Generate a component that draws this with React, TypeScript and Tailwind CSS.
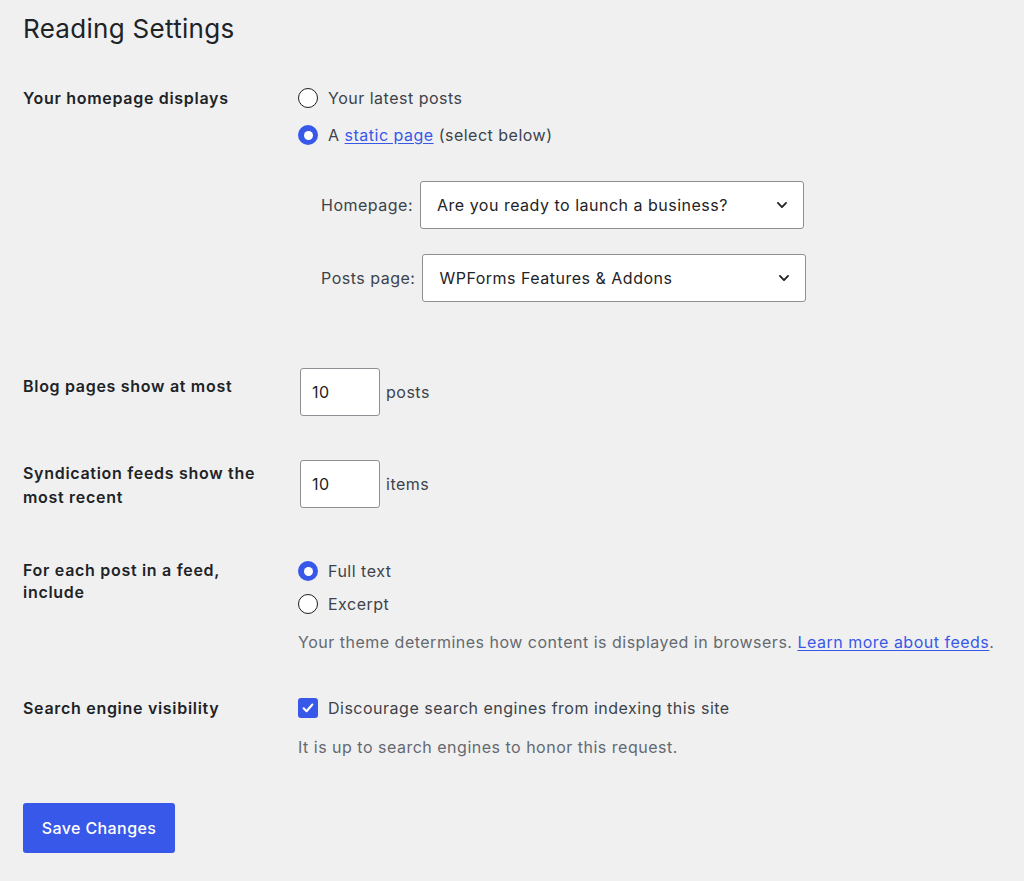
import React from 'react';

const font = { fontFamily: 'Inter, "Noto Sans", "Liberation Sans", sans-serif' };

function Radio({ checked }: { checked?: boolean }) {
  return checked ? (
    <span className="w-5 h-5 rounded-full bg-[#3858e9] flex items-center justify-center flex-shrink-0">
      <span className="w-[9px] h-[9px] rounded-full bg-white" />
    </span>
  ) : (
    <span className="w-5 h-5 rounded-full bg-white border-[1.5px] border-[#1e1e1e] flex-shrink-0" />
  );
}

function Chevron() {
  return (
    <svg width="14" height="14" viewBox="0 0 24 24" className="flex-shrink-0">
      <path d="M5 8.5l7 7 7-7" fill="none" stroke="#1e1e1e" strokeWidth="3" strokeLinecap="round" strokeLinejoin="round" />
    </svg>
  );
}

function Select({ value }: { value: string }) {
  return (
    <div className="w-[384px] h-12 bg-white border border-[#8c8f94] rounded-[3px] flex items-center justify-between pl-4 pr-[14px] text-[16px] text-[#1d2327] tracking-[0.5px]">
      <span>{value}</span>
      <Chevron />
    </div>
  );
}

function NumberBox({ value }: { value: string }) {
  return (
    <div className="w-20 h-12 bg-white border border-[#8c8f94] rounded-[3px] flex items-center pl-[11px] text-[16px] text-[#1d2327] tracking-[0.5px]">
      {value}
    </div>
  );
}

function Row({ label, children, className = '' }: { label: React.ReactNode; children: React.ReactNode; className?: string }) {
  return (
    <div className={`flex ${className}`}>
      <div className="w-[275px] flex-shrink-0 font-semibold text-[16px] leading-[24px] text-[#1d2327] tracking-[0.7px]">{label}</div>
      <div className="flex-1 min-w-0 tracking-[0.5px]">{children}</div>
    </div>
  );
}

export default function App() {
  return (
    <div className="min-h-screen bg-[#f0f0f1] px-[23px] pt-[14px] text-[#3c434a]" style={font}>
      <h1 className="text-[26px] leading-[30px] text-[#1d2327] font-normal tracking-[0.3px]">Reading Settings</h1>

      {/* Homepage displays */}
      <Row label="Your homepage displays" className="mt-[42px]">
        <div className="flex flex-col gap-[13px] text-[16px] leading-[24px]">
          <label className="flex items-center gap-[10px]">
            <Radio />
            <span>Your latest posts</span>
          </label>
          <label className="flex items-center gap-[10px]">
            <Radio checked />
            <span>
              A <a className="text-[#3858e9] underline underline-offset-2">static page</a> (select below)
            </span>
          </label>
        </div>
        <div className="mt-[34px] flex flex-col gap-[25px] text-[16px]">
          <div className="flex items-center gap-[7px] pl-[23px]">
            <span>Homepage:</span>
            <Select value="Are you ready to launch a business?" />
          </div>
          <div className="flex items-center gap-[7px] pl-[23px]">
            <span>Posts page:</span>
            <Select value="WPForms Features & Addons" />
          </div>
        </div>
      </Row>

      {/* Blog pages */}
      <Row label={<div className="pt-[6px]">Blog pages show at most</div>} className="mt-[66px]">
        <div className="flex items-center gap-[6px] pl-[2px] text-[16px]">
          <NumberBox value="10" />
          <span>posts</span>
        </div>
      </Row>

      {/* Syndication */}
      <Row label={<div className="pt-[1px]">Syndication feeds show the<br />most recent</div>} className="mt-[44px]">
        <div className="flex items-center gap-[6px] pl-[2px] text-[16px]">
          <NumberBox value="10" />
          <span>items</span>
        </div>
      </Row>

      {/* Feed content */}
      <Row label={<div className="leading-[22px]">For each post in a feed,<br />include</div>} className="mt-[50px]">
        <div className="flex flex-col gap-[9px] text-[16px] leading-[24px]">
          <label className="flex items-center gap-[10px]">
            <Radio checked />
            <span>Full text</span>
          </label>
          <label className="flex items-center gap-[10px]">
            <Radio />
            <span>Excerpt</span>
          </label>
        </div>
        <p className="mt-[14px] text-[16px] leading-[24px] text-[#646970]">
          Your theme determines how content is displayed in browsers.{' '}
          <a className="text-[#3858e9] underline underline-offset-2">Learn more about feeds</a>.
        </p>
      </Row>

      {/* Search engine */}
      <Row label="Search engine visibility" className="mt-[42px]">
        <label className="flex items-center gap-[10px] text-[16px] leading-[24px]">
          <span className="w-5 h-5 rounded-[3px] bg-[#3858e9] flex items-center justify-center flex-shrink-0">
            <svg width="14" height="14" viewBox="0 0 24 24">
              <path d="M4.5 12.5l5 5L19.5 6" fill="none" stroke="white" strokeWidth="3.5" strokeLinecap="round" strokeLinejoin="round" />
            </svg>
          </span>
          <span>Discourage search engines from indexing this site</span>
        </label>
        <p className="mt-[15px] text-[16px] leading-[24px] text-[#646970]">It is up to search engines to honor this request.</p>
      </Row>

      <button className="mt-[44px] w-[152px] h-[50px] bg-[#3858e9] rounded-[3px] text-white text-[16px] font-medium tracking-[0.4px]">
        Save Changes
      </button>
    </div>
  );
}
